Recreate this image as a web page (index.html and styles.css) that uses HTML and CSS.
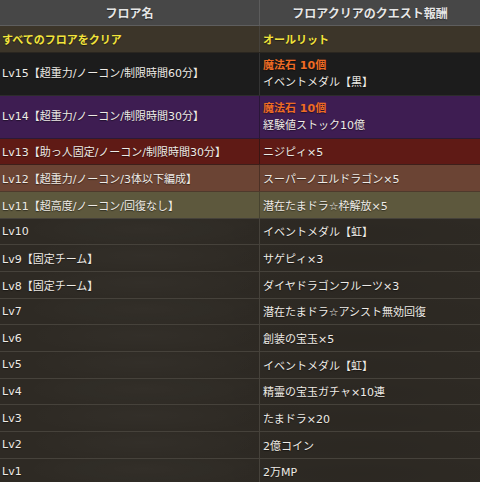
FILE: index.html
```html
<!DOCTYPE html>
<html lang="ja">
<head>
<meta charset="utf-8">
<link rel="stylesheet" href="styles.css">
</head>
<body>
<div class="table">
  <div class="row head"><div class="cell">フロア名</div><div class="cell">フロアクリアのクエスト報酬</div></div>
  <div class="row all"><div class="cell">すべてのフロアをクリア</div><div class="cell">オールリット</div></div>
  <div class="row tall black"><div class="cell">Lv15【超重力/ノーコン/制限時間60分】</div><div class="cell"><span class="stone">魔法石 10個</span><span>イベントメダル【黒】</span></div></div>
  <div class="row tall purple"><div class="cell">Lv14【超重力/ノーコン/制限時間30分】</div><div class="cell"><span class="stone">魔法石 10個</span><span>経験値ストック10億</span></div></div>
  <div class="row red"><div class="cell">Lv13【助っ人固定/ノーコン/制限時間30分】</div><div class="cell">ニジピィ×5</div></div>
  <div class="row brown"><div class="cell">Lv12【超重力/ノーコン/3体以下編成】</div><div class="cell">スーパーノエルドラゴン×5</div></div>
  <div class="row olive"><div class="cell">Lv11【超高度/ノーコン/回復なし】</div><div class="cell">潜在たまドラ☆枠解放×5</div></div>
  <div class="row"><div class="cell">Lv10</div><div class="cell">イベントメダル【虹】</div></div>
  <div class="row"><div class="cell">Lv9【固定チーム】</div><div class="cell">サゲピィ×3</div></div>
  <div class="row"><div class="cell">Lv8【固定チーム】</div><div class="cell">ダイヤドラゴンフルーツ×3</div></div>
  <div class="row"><div class="cell">Lv7</div><div class="cell">潜在たまドラ☆アシスト無効回復</div></div>
  <div class="row"><div class="cell">Lv6</div><div class="cell">創装の宝玉×5</div></div>
  <div class="row"><div class="cell">Lv5</div><div class="cell">イベントメダル【虹】</div></div>
  <div class="row"><div class="cell">Lv4</div><div class="cell">精霊の宝玉ガチャ×10連</div></div>
  <div class="row"><div class="cell">Lv3</div><div class="cell">たまドラ×20</div></div>
  <div class="row"><div class="cell">Lv2</div><div class="cell">2億コイン</div></div>
  <div class="row"><div class="cell">Lv1</div><div class="cell">2万MP</div></div>
</div>
</body>
</html>
```
FILE: styles.css
```css
html, body {
  margin: 0;
  padding: 0;
  background: #2e2a24;
}
body {
  font-family: "DejaVu Sans", "Noto Sans CJK JP", sans-serif;
  font-size: 11px;
  color: #eeebe6;
}
.table {
  display: flex;
  flex-direction: column;
  width: 480px;
  overflow: hidden;
}
.row {
  display: grid;
  grid-template-columns: 260px 1fr;
  height: 26.67px;
  box-sizing: border-box;
  border-bottom: 1px solid #46423b;
  background-color: #2e2a24;
  background-image:
    radial-gradient(ellipse 120px 20px at 30% 40%, rgba(255, 255, 255, 0.025), transparent),
    radial-gradient(ellipse 160px 24px at 75% 60%, rgba(0, 0, 0, 0.06), transparent);
  text-shadow: 0 1px 1px rgba(0, 0, 0, 0.45);
}
.cell {
  display: flex;
  flex-direction: column;
  justify-content: center;
  padding-left: 3px;
  white-space: nowrap;
}
.cell:first-child {
  padding-left: 2px;
  border-right: 1px solid #46423b;
}
.head {
  height: 26px;
  background: #474747;
  border-bottom: 1px solid #5e5e5e;
  font-family: "Liberation Sans", "Noto Sans CJK JP", sans-serif;
  font-size: 12px;
  font-weight: bold;
  color: #e6e6e6;
}
.head .cell {
  align-items: center;
  padding-left: 0;
}
.head .cell:first-child {
  border-right-color: #5c5c5c;
}
.all {
  background: #3c3529;
  font-weight: bold;
  color: #f3e43b;
  border-bottom-color: #2a2620;
}
.tall {
  height: 43px;
  line-height: 17px;
}
.black {
  background: #1c1c1c;
  border-bottom-color: #2c2c2c;
}
.black .cell:first-child {
  border-right-color: #333333;
}
.purple {
  background: #3e1d52;
  border-bottom-color: #2d1a34;
}
.purple .cell:first-child {
  border-right-color: #2a1638;
}
.red {
  background: #5f1a15;
  border-bottom-color: #3e1f1a;
}
.red .cell:first-child {
  border-right-color: #3a1512;
}
.brown {
  background: #6b4434;
  border-bottom-color: #4e3a2c;
}
.brown .cell:first-child {
  border-right-color: #4c3125;
}
.olive {
  background: #5d583d;
  border-bottom-color: #45413a;
}
.olive .cell:first-child {
  border-right-color: #47432f;
}
.stone {
  color: #ee6b24;
  font-weight: bold;
}
```
